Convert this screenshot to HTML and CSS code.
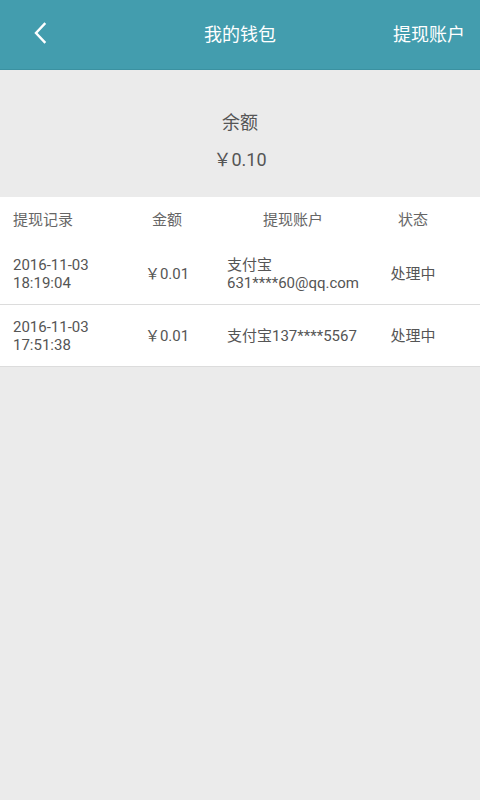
FILE: index.html
```html
<!DOCTYPE html>
<html lang="zh-CN">
<head>
<meta charset="utf-8">
<title>我的钱包</title>
<link rel="stylesheet" href="styles.css">
</head>
<body>
<header class="topbar">
  <div class="back">
    <svg width="14" height="22" viewBox="0 0 14 22"><path d="M11.5 2 L3 11 L11.5 20" fill="none" stroke="#fff" stroke-width="2.4" stroke-linecap="square"/></svg>
  </div>
  <div class="title">我的钱包</div>
  <div class="action">提现账户</div>
</header>
<section class="balance">
  <div class="label">余额</div>
  <div class="amount">￥0.10</div>
</section>
<section class="table">
  <div class="row head">
    <div class="c1">提现记录</div>
    <div class="c2">金额</div>
    <div class="c3">提现账户</div>
    <div class="c4">状态</div>
  </div>
  <div class="row item">
    <div class="c1">2016-11-03<br>18:19:04</div>
    <div class="c2">￥0.01</div>
    <div class="c3 left">支付宝<br>631****60@qq.com</div>
    <div class="c4">处理中</div>
  </div>
  <div class="row item">
    <div class="c1">2016-11-03<br>17:51:38</div>
    <div class="c2">￥0.01</div>
    <div class="c3 left">支付宝137****5567</div>
    <div class="c4">处理中</div>
  </div>
</section>
</body>
</html>
```
FILE: styles.css
```css
html, body {
  margin: 0;
  padding: 0;
  background: #ebebeb;
  font-family: Roboto, "Noto Sans CJK SC", sans-serif;
  width: 480px;
  height: 800px;
  overflow: hidden;
}
.topbar {
  height: 69px;
  background: #439dae;
  border-bottom: 1px solid #3b91a1;
  display: grid;
  grid-template-columns: 1fr auto 1fr;
  align-items: center;
  padding-bottom: 4px;
  box-sizing: content-box;
  color: #fff;
}
.topbar { height: 65px; }
.back {
  padding-left: 33px;
  display: flex;
  align-items: center;
}
.back svg { display: block; }
.title {
  text-align: center;
  font-size: 18px;
}
.action {
  font-size: 18px;
  text-align: right;
  padding-right: 15px;
  white-space: nowrap;
}
.balance {
  height: 127px;
  display: flex;
  flex-direction: column;
  align-items: center;
  padding-top: 41px;
  box-sizing: border-box;
  color: #555;
  font-size: 18px;
}
.balance .label { line-height: 24px; }
.balance .amount { line-height: 24px; margin-top: 13px; }
.table {
  background: #fff;
}
.row {
  display: grid;
  grid-template-columns: 107px 94px 158px 82px;
  padding-left: 13px;
  align-items: center;
  font-size: 15px;
  line-height: 18px;
}
.row.head {
  height: 46px;
  color: #666;
}
.row.item {
  height: 61px;
  color: #555;
  border-bottom: 1px solid #dcdcdc;
}
.c1 { text-align: left; }
.c2, .c3, .c4 { text-align: center; }
.c3.left { text-align: left; padding-left: 13px; }
```
